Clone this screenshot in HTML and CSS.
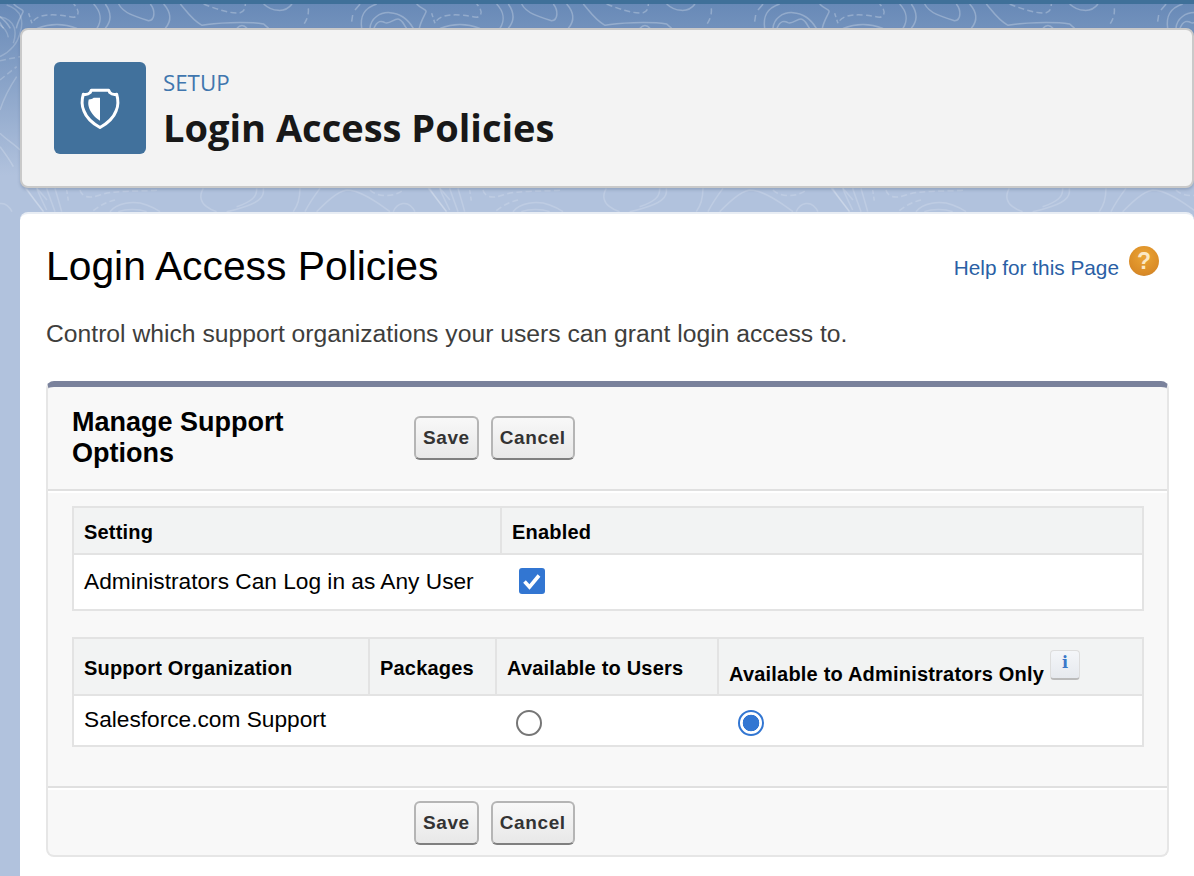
FILE: index.html
```html
<!DOCTYPE html>
<html>
<head>
    <title>Login Access Policies</title>
    <link rel="stylesheet" href="styles.css">
</head>
<body>
    <svg class="contours" width="1194" height="216" fill="none" stroke="#fff" stroke-width="4.5">
        <defs>
            <g id="topStrip" stroke-opacity="0.26">
                <path d="M25 25C27 45 20 60 12 72" stroke-dasharray="18 12"/>
                <path d="M155 65L158 45M165 30C172 22 176 18 180 12" />
                <path d="M185 85C180 50 190 25 230 12"/>
                <path d="M210 85C212 55 240 36 270 38C300 40 325 60 340 85"/>
                <path d="M222 85C232 60 245 62 255 68C270 74 285 52 298 58C310 64 312 76 320 85"/>
                <path d="M350 12C365 28 382 28 378 36C372 50 362 65 358 85"/>
                <path d="M395 40L405 70" stroke-dasharray="12 8"/>
                <path d="M410 62C425 42 470 40 530 52C548 48 548 30 530 12" stroke-dasharray="18 10"/>
                <path d="M420 85C460 70 500 70 540 85"/>
                <path d="M590 12C612 35 615 62 600 85M625 12C645 40 642 65 625 85"/>
                <path d="M665 12C680 40 715 50 755 62C775 60 775 30 760 12"/>
                <path d="M800 12C825 40 822 65 805 85"/>
                <path d="M850 12C870 35 885 60 915 76C950 68 1050 64 1100 72L1115 85"/>
                <path d="M1020 85C1030 74 1040 74 1050 85"/>
                <path d="M920 12C960 28 1000 42 1030 38C1045 32 1045 20 1045 12" stroke-dasharray="18 10"/>
                <path d="M1100 12C1125 35 1165 40 1185 12"/>
            </g>
            <g id="bottomStrip" stroke-opacity="0.17">
                <path d="M80 25C95 50 115 75 130 95M110 25C120 50 130 70 140 90M140 25C148 50 158 75 165 95M165 25C172 50 180 75 185 95"/>
                <path d="M200 30L205 62" stroke-dasharray="12 8"/>
                <path d="M240 30C245 50 265 58 300 45C340 30 420 35 480 30" stroke-dasharray="18 10"/>
                <path d="M280 92C300 76 320 66 345 60" stroke-dasharray="18 10"/>
                <path d="M330 95C350 70 400 60 440 75C460 82 470 88 480 95"/>
                <path d="M355 95C380 86 415 86 440 95"/>
                <path d="M610 25C595 50 605 70 620 80C630 88 640 92 650 95"/>
                <path d="M790 25C795 55 770 70 720 85C705 90 695 92 680 95M770 25C772 50 755 65 710 80"/>
                <path d="M900 25C900 55 895 75 880 95"/>
                <path d="M960 25C945 45 925 75 915 95"/>
                <path d="M950 95C975 70 1010 35 1040 30C1080 30 1130 65 1170 95"/>
                <path d="M1110 30C1130 50 1175 55 1210 30" stroke-dasharray="18 10"/>
                <path d="M1180 95C1190 70 1225 55 1245 95"/>
                <path d="M1285 25C1305 50 1325 75 1340 95M1320 25L1350 60"/>
            </g>
            <pattern id="topo" width="403" height="216" patternUnits="userSpaceOnUse">
                <use href="#topStrip" transform="translate(300 0) scale(0.3333)"/>
                <use href="#topStrip" transform="translate(-103 0) scale(0.3333)"/>
                <use href="#bottomStrip" transform="translate(0 180) scale(0.3333)"/>
                <use href="#bottomStrip" transform="translate(-403 180) scale(0.3333)"/>
            </pattern>
        </defs>
        <rect width="1194" height="216" fill="url(#topo)" stroke="none"/>
        <g transform="scale(0.3333)" stroke-opacity="0.2">
            <path d="M0 50C50 60 50 100 40 130"/>
            <path d="M0 75C12 85 20 90 25 112"/>
            <path d="M20 15C70 30 70 70 60 100C50 140 20 160 0 170"/>
            <path d="M0 182L60 170" stroke-dasharray="18 10"/>
            <path d="M0 240L50 200" stroke-dasharray="18 10"/>
            <path d="M50 230C30 260 10 300 0 330"/>
            <path d="M0 400C20 420 40 430 60 450"/>
            <path d="M0 440C15 460 30 480 40 500"/>
        </g>
    </svg>

    <div class="page-header">
        <div class="header-icon">
            <svg width="46" height="46" viewBox="0 0 40 40">
                <path d="M12.5 4.5H27.5L28.5 6.5C30 8 32 8.5 34.5 8C36 13 36 18 34 22.5C32 28 27 33 20 37C13 33 8 28 6 22.5C4 18 4 13 5.5 8C8 8.5 10 8 11.5 6.5Z" fill="none" stroke="#fff" stroke-width="2.6" stroke-linejoin="round"/>
                <path d="M20 11V31C15 28 11 23 10 18C9.6 16 9.8 14 10.2 12.5C12 12.5 13.5 12 14.5 11Z" fill="#fff"/>
            </svg>
        </div>
        <div>
            <div class="header-label">SETUP</div>
            <div class="header-title">Login Access Policies</div>
        </div>
    </div>

    <div class="content">
        <div class="title-row">
            <h1>Login Access Policies</h1>
            <div class="help">
                <a href="#">Help for this Page</a>
                <span class="help-icon">?</span>
            </div>
        </div>
        <p class="intro">Control which support organizations your users can grant login access to.</p>

        <div class="block">
            <div class="block-head">
                <h2><span class="block-title">Manage Support Options</span></h2>
                <div class="buttons">
                    <button class="btn">Save</button>
                    <button class="btn">Cancel</button>
                </div>
            </div>
            <div class="block-body">
                <table class="list settings">
                    <thead>
                        <tr>
                            <th class="col-setting">Setting</th>
                            <th class="col-enabled">Enabled</th>
                        </tr>
                    </thead>
                    <tbody>
                        <tr>
                            <td>Administrators Can Log in as Any User</td>
                            <td class="check-cell">
                                <span class="checkbox">
                                    <svg width="26" height="26" viewBox="0 0 26 26"><path d="M5.5 13.5L10.5 19L20 7.5" fill="none" stroke="#fff" stroke-width="3.6"/></svg>
                                </span>
                            </td>
                        </tr>
                    </tbody>
                </table>

                <table class="list orgs">
                    <thead>
                        <tr>
                            <th class="col-org">Support Organization</th>
                            <th class="col-packages">Packages</th>
                            <th class="col-users">Available to Users</th>
                            <th class="col-admins"><span class="admins-label">Available to Administrators Only</span><span class="info">i</span></th>
                        </tr>
                    </thead>
                    <tbody>
                        <tr>
                            <td>Salesforce.com Support</td>
                            <td></td>
                            <td class="radio-cell"><span class="radio"></span></td>
                            <td class="radio-cell"><span class="radio on"></span></td>
                        </tr>
                    </tbody>
                </table>
            </div>
            <div class="block-foot">
                <button class="btn">Save</button>
                <button class="btn">Cancel</button>
            </div>
        </div>
    </div>
</body>
</html>
```

FILE: styles.css
```css
html, body { height: 876px; overflow: hidden; }
body {
    margin: 0;
    border-top: 4px solid #3f7099;
    box-sizing: border-box;
    padding: 24px 0 0 20px;
    position: relative;
    background: linear-gradient(#6688b6 0, #b1c2dd 175px, #b1c2dd 100%);
    font-family: "Liberation Sans", Arial, sans-serif;
    color: #000;
}
.contours { position: absolute; left: 0; top: -4px; }

.page-header {
    position: relative;
    display: flex;
    align-items: center;
    gap: 17px;
    box-sizing: border-box;
    height: 160px;
    padding-left: 32px;
    background: #f3f3f3;
    border: 2px solid #c9c9c9;
    border-radius: 8px;
    box-shadow: 0 2px 3px rgba(60, 80, 110, 0.25);
}
.header-icon {
    width: 92px;
    height: 92px;
    border-radius: 6px;
    background: #41719c;
    display: flex;
    align-items: center;
    justify-content: center;
}
.header-label {
    font-family: "Open Sans", sans-serif;
    font-size: 22.3px;
    line-height: 30px;
    margin-top: 4px;
    color: #4076ae;
}
.header-title {
    font-family: "Open Sans", sans-serif;
    font-size: 38px;
    font-weight: 700;
    line-height: 52px;
    margin-top: 3px;
    color: #181818;
}

.content {
    position: relative;
    box-sizing: border-box;
    height: 700px;
    margin-top: 24px;
    padding: 26px 25px 0 26px;
    background: #fff;
    border-top: 2px solid #e8edf4;
    border-radius: 8px 8px 0 0;
}
.title-row { display: flex; justify-content: space-between; align-items: flex-start; }
h1 { margin: 0; font-size: 40.8px; font-weight: 400; line-height: 52px; }
.help { display: flex; align-items: center; gap: 10px; margin: 4px 10px 0 0; }
.help a { color: #2a5fa5; text-decoration: none; font-size: 20.8px; position: relative; top: 8px; }
.help-icon {
    width: 30px;
    height: 30px;
    border-radius: 50%;
    background: radial-gradient(circle at 50% 35%, #eba535, #d98a26 70%, #b57a3a);
    color: #fbe8c4;
    font-size: 23px;
    font-weight: 700;
    line-height: 30px;
    text-align: center;
    margin-top: 2px;
}
.intro { margin: 26px 0 0; font-size: 24.7px; line-height: 32px; color: #3e3e3c; }

.block {
    box-sizing: border-box;
    height: 476px;
    margin-top: 31px;
    background: #f8f8f8;
    border: 2px solid #e6e6e6;
    border-top: 6px solid #7a829c;
    border-radius: 8px;
}
.block-head {
    display: flex;
    box-sizing: border-box;
    height: 104px;
    padding-left: 24px;
    align-items: center;
    border-bottom: 2px solid #e0e0e0;
}
h2 { margin: 0; width: 342px; font-size: 27px; font-weight: 700; line-height: 31px; }
.block-title { display: block; width: 260px; }
.buttons, .block-foot { display: flex; gap: 12px; }
.btn {
    box-sizing: border-box;
    height: 44px;
    padding: 0 7px;
    background: linear-gradient(#f8f8f8, #e8e8e8);
    border: 2px solid #b5b5b5;
    border-bottom-color: #7f7f7f;
    border-radius: 6px;
    font-family: "Liberation Sans", Arial, sans-serif;
    font-size: 19px;
    font-weight: 700;
    letter-spacing: 0.6px;
    color: #333;
}
.block-body { padding: 13px 24px 0 24px; border-top: 2px solid #fff; }

table.list {
    width: 1072px;
    border-collapse: collapse;
    table-layout: fixed;
    background: #fff;
    border: 2px solid #e3e3e3;
    font-size: 22.7px;
}
th {
    background: #f2f3f3;
    border-left: 2px solid #e3e3e3;
    border-bottom: 2px solid #e3e3e3;
    text-align: left;
    font-size: 20px;
    font-weight: 700;
    letter-spacing: 0.2px;
    padding: 3px 0 0 10px;
}
th:first-child { border-left: 0; }
td { padding: 0 0 2px 10px; }
.settings th { height: 42px; }
.settings td { height: 52px; }
.col-setting { width: 416px; }
.orgs { margin-top: 26px; }
.orgs th { height: 52px; }
.orgs td { height: 47px; }
.col-org { width: 284px; }
.col-packages { width: 115px; }
.col-users { width: 210px; }
.checkbox {
    display: block;
    width: 26px;
    height: 26px;
    margin-left: 8px;
    background: #3276d2;
    border-radius: 3px;
}
.checkbox svg { display: block; }
.radio {
    display: block;
    box-sizing: border-box;
    width: 26px;
    height: 26px;
    margin-left: 10px;
    margin-top: 6px;
    border: 2px solid #767676;
    border-radius: 50%;
    background: #fff;
}
.radio.on {
    border-color: #3276d2;
    background: radial-gradient(circle, #3276d2 0 8px, #fff 8.6px);
}
.col-admins { white-space: nowrap; }
.admins-label { position: relative; top: 10px; }
.info {
    display: inline-block;
    vertical-align: top;
    position: relative;
    top: -3px;
    width: 30px;
    height: 30px;
    margin-left: 6px;
    box-sizing: border-box;
    border: 1px solid #ddd;
    border-bottom: 2px solid #bbb;
    border-radius: 4px;
    background: linear-gradient(#f4f6f9, #e6e9ee);
    font-family: "DejaVu Serif", serif;
    font-size: 16px;
    font-weight: 700;
    letter-spacing: 0;
    line-height: 24px;
    text-align: center;
    color: #3a78c9;
}
.block-foot {
    box-sizing: border-box;
    height: 72px;
    margin-top: 39px;
    padding-left: 366px;
    align-items: center;
    border-top: 2px solid #e0e0e0;
    box-shadow: inset 0 2px 0 #fff;
}
```
